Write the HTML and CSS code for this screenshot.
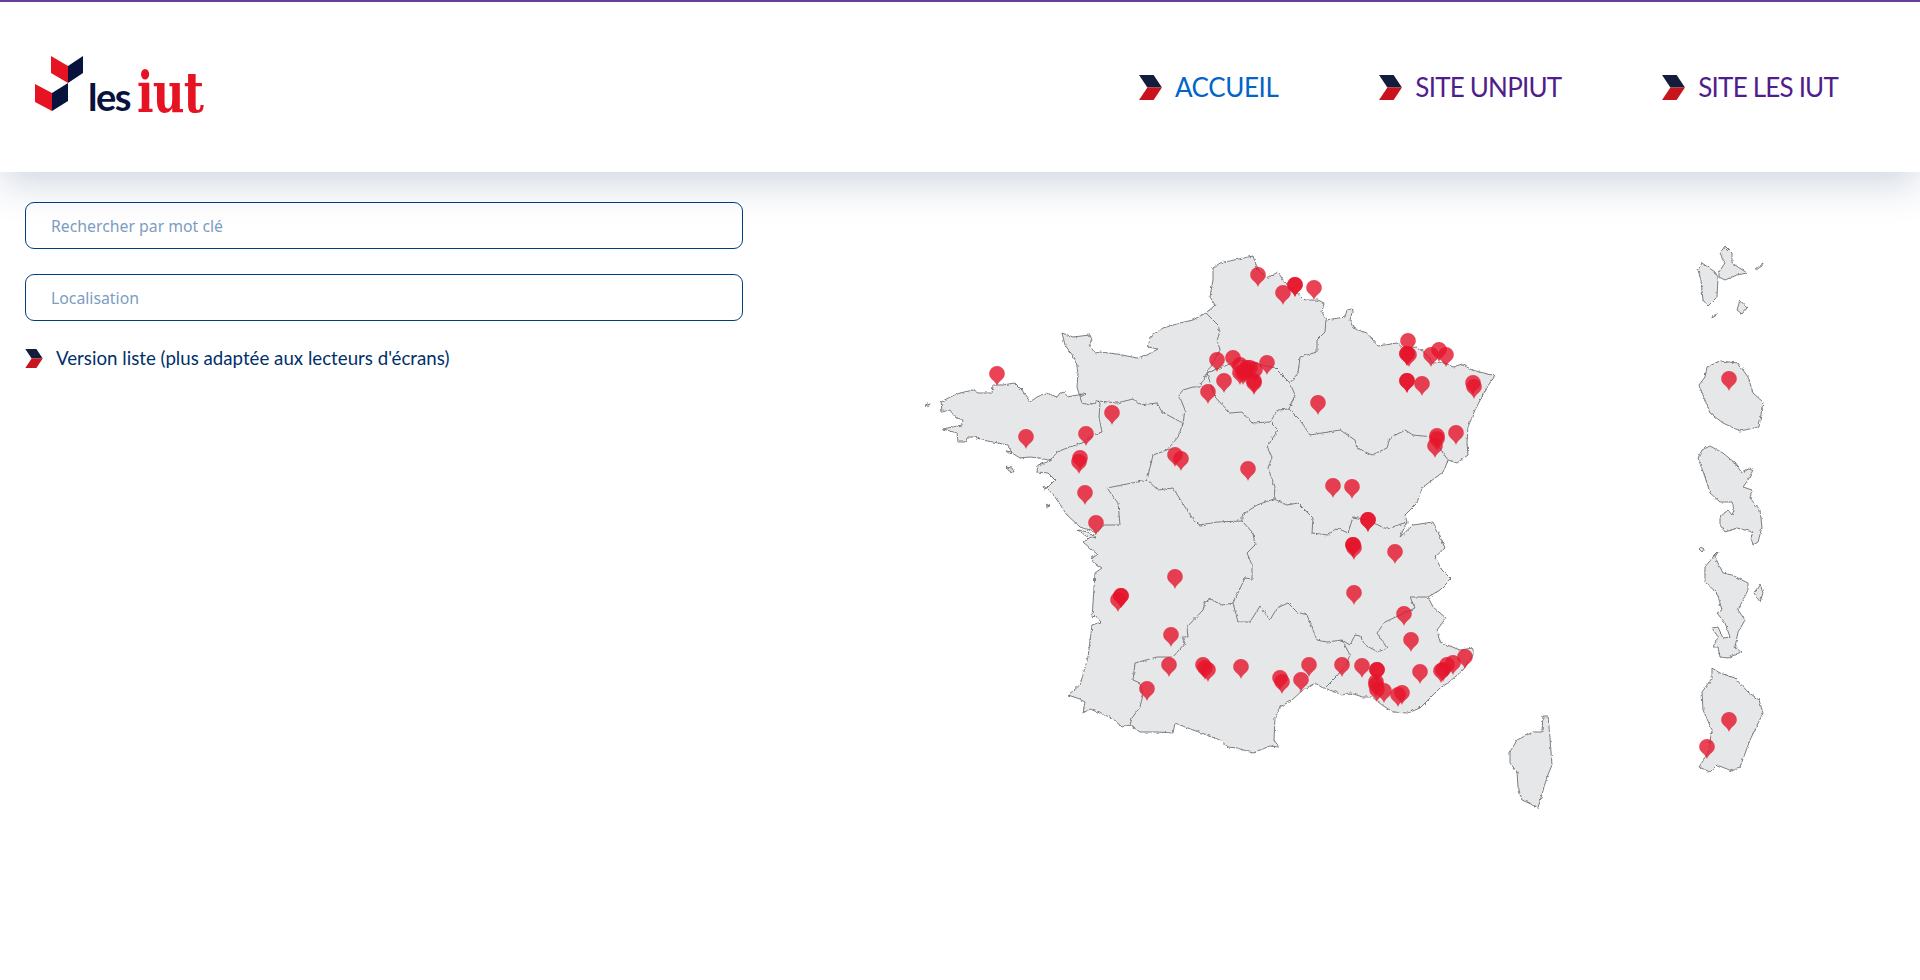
FILE: index.html
```html
<!DOCTYPE html>
<html lang="fr">
<head>
<meta charset="utf-8">
<title>Les IUT - Carte</title>
<link rel="stylesheet" href="styles.css">
</head>
<body>
<svg class="defs" width="0" height="0" aria-hidden="true">
  <defs>
    <symbol id="chev" viewBox="0 0 22 24">
      <path class="chev-top" d="M0 0H14L22 12H8Z"/>
      <path class="chev-bot" d="M8 12H22L14 24H0Z"/>
    </symbol>
    <path id="pin" d="M0 0C-.8-3-3-4.5-5.2-6.7C-6.9-8.2-7.8-10-7.8-12.2A7.8 7.8 0 1 1 7.8-12.2C7.8-10 6.9-8.2 5.2-6.7C3-4.5 .8-3 0 0Z"/>
    <filter id="rough" x="-2%" y="-2%" width="104%" height="104%">
      <feTurbulence type="fractalNoise" baseFrequency="0.28" numOctaves="2" seed="4"/>
      <feDisplacementMap in="SourceGraphic" scale="3" xChannelSelector="R" yChannelSelector="G"/>
    </filter>
  </defs>
</svg>
<header class="site-header">
  <a class="logo" href="#">
    <svg class="logo-mark" viewBox="35 56 48 55" aria-hidden="true">
      <path class="red" d="M51 56L68 66V83L51 73Z"/>
      <path class="navy" d="M68 66L83 56V73L68 83Z"/>
      <path class="red" d="M35 84L52 93V111L35 102Z"/>
      <path class="navy" d="M52 93L68 83V101L52 111Z"/>
    </svg>
    <span class="logo-les">les</span><span class="logo-iut">iut</span>
  </a>
  <nav class="nav">
    <a class="nav-link active" href="#"><svg class="chev-nav"><use href="#chev"/></svg>ACCUEIL</a>
    <a class="nav-link nav-tight" href="#"><svg class="chev-nav"><use href="#chev"/></svg>SITE UNPIUT</a>
    <a class="nav-link nav-tight" href="#"><svg class="chev-nav"><use href="#chev"/></svg>SITE LES IUT</a>
  </nav>
</header>
<main class="content">
  <section class="filters">
    <input class="field" type="text" placeholder="Rechercher par mot clé">
    <input class="field" type="text" placeholder="Localisation">
    <a class="list-link" href="#"><svg class="chev-small"><use href="#chev"/></svg>Version liste (plus adaptée aux lecteurs d'écrans)</a>
  </section>
  <svg class="map" viewBox="900 230 1000 600" role="img" aria-label="Carte des IUT de France">
    <g class="land" filter="url(#rough)">
      <path d="M941 402L950 397L960 393L973 390L978 393L992 393L993 385L1003 385L1015 383L1022 390L1030 402L1037 397L1047 393L1057 397L1060 393L1065 392L1067 397L1083 394L1086 394L1080 397L1077 387L1078 373L1076 360L1065 345L1062 333L1073 337L1090 335L1092 340L1089 345L1095 353L1100 352L1117 354L1137 358L1147 355L1158 349L1148 347L1150 337L1163 328L1180 323L1193 320L1200 316L1206 313L1215 305L1210 297L1213 280L1213 268L1220 263L1253 256L1258 270L1267 278L1278 272L1285 283L1300 295L1305 300L1318 300L1324 303L1322 312L1326 320L1345 317L1347 310L1353 309L1350 320L1353 328L1367 333L1378 346L1397 343L1403 348L1417 347L1427 355L1433 363L1443 362L1453 367L1462 364L1472 370L1495 376L1487 387L1475 410L1468 427L1467 443L1468 455L1457 463L1448 460L1445 468L1443 472L1423 487L1420 493L1417 503L1405 515L1407 522L1400 537L1413 525L1433 522L1437 530L1445 548L1435 557L1442 570L1451 579L1440 590L1428 597L1433 607L1446 618L1437 630L1440 642L1460 650L1473 648L1473 655L1463 670L1448 683L1440 688L1428 700L1420 708L1408 713L1393 712L1382 705L1372 697L1363 697L1350 693L1342 695L1325 688L1323 688L1315 683L1303 690L1292 700L1280 707L1275 717L1274 740L1279 747L1270 746L1253 753L1237 748L1228 747L1220 740L1207 735L1193 730L1175 723L1173 733L1157 732L1140 732L1130 725L1122 727L1112 718L1090 709L1083 713L1085 702L1077 698L1068 695L1080 685L1088 657L1092 625L1101 622L1095 615L1092 618L1095 573L1102 568L1093 562L1092 557L1098 555L1083 542L1097 533L1080 527L1067 515L1055 497L1047 488L1055 480L1048 473L1037 472L1038 465L1047 462L1053 458L1048 460L1040 458L1030 457L1020 458L1012 453L1008 445L993 442L982 440L975 437L968 437L965 442L958 442L957 433L943 429L962 425L963 420L955 417L950 410L942 412Z"/>
      <path d="M1548 716L1543 716L1542 732L1533 732L1517 740L1510 752L1510 763L1517 772L1518 787L1522 800L1533 805L1538 808L1547 777L1552 765L1550 738Z"/>
      <path d="M1702 263L1715 272L1718 277L1717 297L1708 306L1703 300L1701 280L1698 270Z"/>
      <path d="M1719 272L1725 263L1720 253L1725 246L1732 253L1732 263L1747 273L1737 275L1725 280L1719 277Z"/>
      <path d="M1740 300L1747 308L1742 314L1737 310Z"/>
      <path d="M1755 269L1763 263L1762 266L1756 270Z"/>
      <path d="M1712 316L1718 314L1712 318Z"/>
      <path d="M1720 361L1738 363L1748 377L1753 393L1763 402L1759 427L1740 431L1723 423L1710 413L1705 400L1699 385L1705 377L1707 367Z"/>
      <path d="M1710 446L1723 453L1735 463L1742 473L1750 468L1753 470L1748 480L1743 487L1752 490L1750 498L1760 510L1762 527L1758 542L1753 545L1751 538L1753 532L1737 528L1725 532L1720 525L1720 517L1728 510L1732 515L1734 510L1732 502L1720 502L1710 493L1705 477L1698 458L1702 450Z"/>
      <path d="M1701 547L1704 549L1702 552L1699 549Z"/>
      <path d="M1718 552L1715 557L1723 573L1732 575L1748 583L1748 590L1738 610L1745 620L1738 632L1735 647L1741 652L1728 658L1720 657L1718 647L1713 647L1718 637L1712 628L1718 627L1723 638L1730 637L1725 623L1717 613L1722 610L1717 593L1705 582L1705 567L1713 557Z"/>
      <path d="M1760 584L1763 593L1760 602L1754 593Z"/>
      <path d="M1712 668L1720 673L1735 678L1748 692L1759 700L1763 713L1750 740L1740 767L1732 771L1717 765L1710 772L1699 767L1708 753L1712 730L1703 710L1702 692L1712 678Z"/>
      <path d="M925 405L930 403L928 407Z"/>
      <path d="M1006 451L1012 452L1010 454Z"/>
      <path d="M1006 467L1012 468L1014 472L1009 471Z"/>
      <path d="M1043 486L1047 488L1044 489Z"/>
      <path d="M1078 530L1088 532L1096 538L1086 536Z"/>
      <path d="M1046 504L1050 506L1047 507Z"/>
      <path class="border" d="M1080 397L1082 403L1090 405L1098 401L1100 403L1099 417L1102 432L1093 435L1085 442L1067 448L1057 452L1053 458"/>
      <path class="border" d="M1098 401L1117 403L1133 399L1140 405L1157 403L1162 412L1177 420L1183 423L1178 437L1167 450L1153 455L1147 480L1158 490L1173 488L1185 507L1195 522L1200 525L1217 522L1242 521"/>
      <path class="border" d="M1183 423L1185 410L1179 395L1183 390L1193 387L1200 387L1207 373L1220 350L1217 340L1220 332L1218 325L1206 313"/>
      <path class="border" d="M1207 373L1215 397L1230 413L1242 412L1252 423L1270 422L1278 410L1289 409L1295 395L1290 383L1275 368L1240 360L1207 373"/>
      <path class="border" d="M1290 383L1298 373L1300 357L1317 352L1317 340L1325 332L1326 320"/>
      <path class="border" d="M1270 422L1278 430L1267 447L1272 457L1268 468L1275 487L1274 499L1257 505L1242 515L1242 521L1253 533L1255 545L1247 553L1252 565L1252 579L1245 578L1237 595L1233 603L1222 605L1210 599L1205 602L1203 610L1187 627L1188 637L1182 637L1185 643L1173 657L1157 657L1135 663L1133 680L1140 683L1143 695L1140 707L1132 718L1130 725"/>
      <path class="border" d="M1289 409L1300 420L1310 435L1340 430L1355 440L1357 448L1372 455L1387 448L1390 438L1405 430L1413 435L1433 437L1443 453L1448 460"/>
      <path class="border" d="M1274 499L1287 505L1298 503L1313 518L1312 533L1328 535L1337 528L1348 533L1353 517L1367 520L1387 529L1398 525L1407 522"/>
      <path class="border" d="M1147 480L1107 488L1118 503L1120 525L1103 525L1097 533"/>
      <path class="border" d="M1233 603L1238 622L1250 622L1260 606L1270 620L1277 608L1288 603L1297 612L1307 615L1317 640L1327 642L1342 640L1350 645L1355 635L1360 636L1365 645L1378 652L1387 648L1377 633L1385 622L1400 615L1415 608L1410 597L1428 597"/>
      <path class="border" d="M1342 640L1350 655L1345 667L1335 678L1325 688"/>
    </g>
    <g class="pins">
      <use href="#pin" x="997" y="386"/><use href="#pin" x="1026" y="449"/><use href="#pin" x="1086" y="446"/><use href="#pin" x="1112" y="425"/><use href="#pin" x="1080" y="470"/><use href="#pin" x="1079" y="474"/><use href="#pin" x="1085" y="505"/><use href="#pin" x="1096" y="535"/><use href="#pin" x="1175" y="467"/><use href="#pin" x="1181" y="471"/>
      <use href="#pin" x="1258" y="287"/><use href="#pin" x="1295" y="297"/><use href="#pin" x="1295" y="297"/><use href="#pin" x="1283" y="305"/><use href="#pin" x="1314" y="300"/><use href="#pin" x="1217" y="372"/><use href="#pin" x="1224" y="393"/><use href="#pin" x="1208" y="404"/><use href="#pin" x="1233" y="370"/><use href="#pin" x="1240" y="385"/><use href="#pin" x="1243" y="385"/><use href="#pin" x="1247" y="380"/><use href="#pin" x="1240" y="377"/><use href="#pin" x="1250" y="380"/><use href="#pin" x="1245" y="383"/><use href="#pin" x="1255" y="382"/><use href="#pin" x="1254" y="395"/><use href="#pin" x="1254" y="393"/><use href="#pin" x="1267" y="375"/><use href="#pin" x="1318" y="415"/><use href="#pin" x="1248" y="481"/><use href="#pin" x="1333" y="498"/><use href="#pin" x="1352" y="499"/>
      <use href="#pin" x="1408" y="353"/><use href="#pin" x="1407" y="366"/><use href="#pin" x="1407" y="366"/><use href="#pin" x="1409" y="367"/><use href="#pin" x="1407" y="393"/><use href="#pin" x="1407" y="393"/><use href="#pin" x="1422" y="396"/><use href="#pin" x="1431" y="367"/><use href="#pin" x="1439" y="362"/><use href="#pin" x="1446" y="367"/><use href="#pin" x="1473" y="395"/><use href="#pin" x="1474" y="399"/><use href="#pin" x="1456" y="445"/><use href="#pin" x="1437" y="448"/><use href="#pin" x="1437" y="451"/><use href="#pin" x="1435" y="458"/>
      <use href="#pin" x="1175" y="589"/><use href="#pin" x="1121" y="608"/><use href="#pin" x="1121" y="608"/><use href="#pin" x="1118" y="612"/><use href="#pin" x="1171" y="647"/><use href="#pin" x="1169" y="677"/><use href="#pin" x="1203" y="677"/><use href="#pin" x="1205" y="680"/><use href="#pin" x="1208" y="682"/><use href="#pin" x="1241" y="679"/><use href="#pin" x="1282" y="694"/><use href="#pin" x="1280" y="690"/><use href="#pin" x="1301" y="692"/><use href="#pin" x="1309" y="677"/><use href="#pin" x="1147" y="701"/>
      <use href="#pin" x="1368" y="532"/><use href="#pin" x="1368" y="532"/><use href="#pin" x="1353" y="557"/><use href="#pin" x="1353" y="557"/><use href="#pin" x="1354" y="560"/><use href="#pin" x="1395" y="564"/><use href="#pin" x="1354" y="605"/><use href="#pin" x="1404" y="626"/><use href="#pin" x="1411" y="652"/><use href="#pin" x="1342" y="677"/><use href="#pin" x="1362" y="678"/><use href="#pin" x="1377" y="682"/><use href="#pin" x="1377" y="682"/><use href="#pin" x="1376" y="697"/><use href="#pin" x="1376" y="694"/><use href="#pin" x="1377" y="702"/><use href="#pin" x="1384" y="703"/><use href="#pin" x="1398" y="707"/><use href="#pin" x="1402" y="705"/><use href="#pin" x="1420" y="684"/><use href="#pin" x="1441" y="683"/><use href="#pin" x="1443" y="682"/><use href="#pin" x="1447" y="677"/><use href="#pin" x="1453" y="675"/><use href="#pin" x="1465" y="669"/>
      <use href="#pin" x="1729" y="391"/><use href="#pin" x="1729" y="732"/><use href="#pin" x="1707" y="759"/>
    </g>
  </svg>
</main>
</body>
</html>
```
FILE: styles.css
```css
* { box-sizing: border-box; }
html, body { margin: 0; height: 100%; background: #fff; overflow: hidden; }
body { font-family: "Lato", "Liberation Sans", sans-serif; }
a { text-decoration: none; }
.defs { position: absolute; }
.chev-top { fill: #141c3c; }
.chev-bot { fill: #c8141c; }

.site-header {
  position: relative;
  z-index: 1;
  display: flex;
  justify-content: space-between;
  height: 172px;
  border-top: 2px solid #663f9c;
  background: #fff;
  box-shadow: 0 10px 40px rgba(0, 40, 90, .2);
}
.logo { display: flex; align-items: flex-end; height: 109px; padding-left: 35px; }
.logo-mark { width: 48px; height: 55px; margin-right: 5px; }
.red { fill: #e61423; }
.navy { fill: #07133c; }
.logo-les {
  width: 49px;
  font: 700 38px/38px "Lato", sans-serif;
  letter-spacing: -1.5px;
  color: #07133c;
  margin-bottom: -4px;
}
.logo-iut {
  font: 700 56px/56px "DejaVu Serif", serif;
  letter-spacing: -1px;
  color: #e61423;
  transform: scaleX(.78);
  transform-origin: left bottom;
  margin-bottom: -9px;
}

.nav { display: flex; align-items: flex-start; padding: 67px 0 0; margin-right: 82px; gap: 101px; }
.nav-link { display: flex; align-items: center; gap: 13px; font-size: 26px; line-height: 36px; color: #4f1d8c; white-space: nowrap; }
.nav-link.active { color: #0064c8; letter-spacing: -.4px; }
.nav-tight { letter-spacing: -.8px; }
.chev-nav { width: 23px; height: 25px; }

.content { display: flex; }
.filters { display: flex; flex-direction: column; width: 900px; padding: 30px 0 0 25px; }
.field {
  display: block;
  width: 718px;
  height: 47px;
  margin-bottom: 25px;
  padding: 0 25px;
  border: 1px solid #004080;
  border-radius: 9px;
  background: transparent;
  font: 15.8px "Noto Sans", sans-serif;
  outline: none;
}
.field::placeholder { color: #7d9cc2; opacity: 1; }
.list-link { display: flex; align-items: center; gap: 13px; margin-top: -1px; font-size: 18.7px; line-height: 26px; color: #00306c; }
.chev-small { width: 18px; height: 19px; }

.map { flex: none; width: 1000px; height: 600px; margin-top: 58px; }
.land path { fill: #e6e7e9; stroke: #6f6f72; stroke-width: .9; stroke-linejoin: round; }
.land .border { fill: none; }
.pins use { fill: #e5142b; opacity: .8; }
```
